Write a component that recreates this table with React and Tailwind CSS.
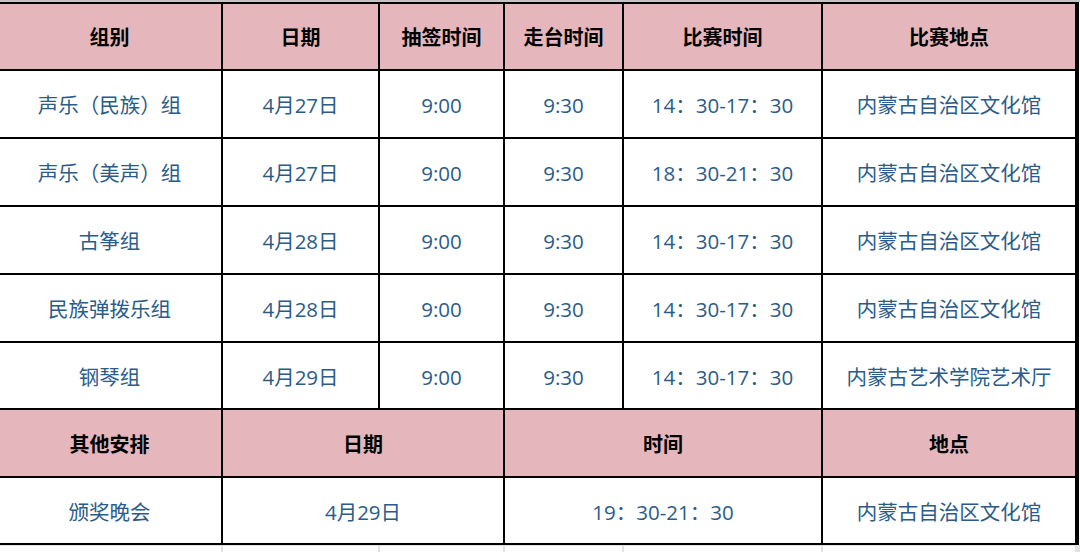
import React from "react";

const font = { fontFamily: '"Open Sans", "Noto Sans CJK SC", sans-serif' };

function H({ children, span = "" }) {
  return (
    <div className={`bg-[#e5b7bd] flex items-center justify-center pt-[3px] text-[20px] font-bold text-black ${span}`}>
      {children}
    </div>
  );
}

function D({ children, span = "" }) {
  return (
    <div className={`bg-white flex items-center justify-center pt-[3px] text-[20.5px] text-[#2b5c89] ${span}`}>
      {children}
    </div>
  );
}

const rows = [
  ["声乐（民族）组", "4月27日", "9:00", "9:30", "14：30-17：30", "内蒙古自治区文化馆"],
  ["声乐（美声）组", "4月27日", "9:00", "9:30", "18：30-21：30", "内蒙古自治区文化馆"],
  ["古筝组", "4月28日", "9:00", "9:30", "14：30-17：30", "内蒙古自治区文化馆"],
  ["民族弹拨乐组", "4月28日", "9:00", "9:30", "14：30-17：30", "内蒙古自治区文化馆"],
  ["钢琴组", "4月29日", "9:00", "9:30", "14：30-17：30", "内蒙古艺术学院艺术厅"],
];

export default function App() {
  return (
    <div className="w-[1080px] h-[552px] overflow-hidden bg-white" style={font}>
      <div className="h-[2px] bg-[#c4c4c4]" />
      <div className="ml-[-4px] w-[1083px] bg-black p-[2px] grid grid-cols-[223px_155px_123px_117px_197px_252px] grid-rows-[65px_66px_66px_66px_66px_65px_66px_65px] gap-[2px]">
        <H>组别</H>
        <H>日期</H>
        <H>抽签时间</H>
        <H>走台时间</H>
        <H>比赛时间</H>
        <H>比赛地点</H>
        {rows.map((r, i) => (
          <React.Fragment key={i}>
            {r.map((c, j) => (
              <D key={j}>{c}</D>
            ))}
          </React.Fragment>
        ))}
        <H>其他安排</H>
        <H span="col-span-2">日期</H>
        <H span="col-span-2">时间</H>
        <H>地点</H>
        <D>颁奖晚会</D>
        <D span="col-span-2">4月29日</D>
        <D span="col-span-2">19：30-21：30</D>
        <D>内蒙古自治区文化馆</D>
      </div>
      <div className="ml-[-4px] w-[1085px] h-[10px] bg-[#e2e2e2] pt-px px-[2px] grid grid-cols-[223px_155px_123px_117px_197px_252px] gap-[2px]">
        <div className="bg-white" />
        <div className="bg-white" />
        <div className="bg-white" />
        <div className="bg-white" />
        <div className="bg-white" />
        <div className="bg-white" />
      </div>
    </div>
  );
}
